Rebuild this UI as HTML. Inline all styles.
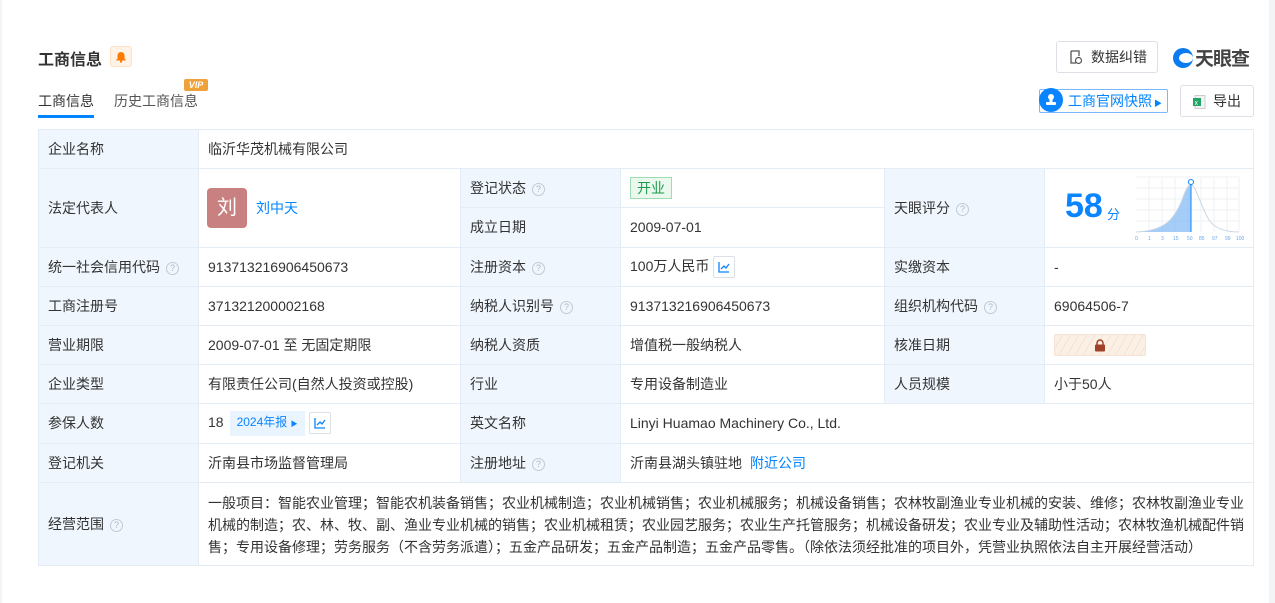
<!DOCTYPE html>
<html><head><meta charset="utf-8"><style>
*{box-sizing:border-box;margin:0;padding:0}
body{width:1275px;height:603px;background:#fff;font-family:"Liberation Sans","Noto Sans CJK SC",sans-serif;font-size:14px;color:#333;position:relative;overflow:hidden}
.edge{position:absolute;top:0;right:0;width:6px;height:603px;background:#f3f4f6}
.ledge{position:absolute;top:0;left:0;width:2px;height:603px;background:#f3f4f6}
.title{position:absolute;left:38px;top:46px;font-size:16px;font-weight:700;color:#333}
.bell{position:absolute;left:110px;top:46px;width:22px;height:21px;background:#fff3e8;border:1px solid #ffe0c2;border-radius:3px}
.tab1{position:absolute;left:38px;top:91px;font-size:14px;color:#333}
.tabline{position:absolute;left:38px;top:115px;width:56px;height:3px;background:#0084ff}
.tab2{position:absolute;left:114px;top:91px;color:#555}
.vip{position:absolute;left:184px;top:79px;width:24px;height:12px;background:#f0a23a;color:#fff;font-size:9px;font-weight:bold;font-style:italic;text-align:center;line-height:12px;border-radius:2px}
.btn{position:absolute;border:1px solid #dcdfe6;border-radius:3px;background:#fff;color:#333;font-size:14px}
table{position:absolute;left:38px;top:129px;border-collapse:collapse;table-layout:fixed}
td{border:1px solid #e4ecf5;height:39.2px;padding:0 9px;vertical-align:middle;font-size:14px;color:#333}
td.h{background:#eff6fd}
.q{display:inline-block;width:13px;height:13px;border:1px solid #c2cad6;border-radius:50%;font-size:9px;color:#b0b8c4;text-align:center;line-height:11px;vertical-align:1px;margin-left:6px}
a{color:#0084ff;text-decoration:none}
.ic{display:inline-block;width:22px;height:22px;border:1px solid #dcdfe6;border-radius:2px;vertical-align:middle;margin-left:4px;position:relative}
</style></head><body>
<div class="ledge"></div><div class="edge"></div>
<div class="title">工商信息</div>
<div class="bell"><svg width="20" height="19" viewBox="0 0 20 19"><path d="M6.5 12.5 V8.5 a3.5 3.5 0 0 1 7 0 V12.5 Z" fill="#ff7a00"/><rect x="5.5" y="12" width="9" height="1.5" fill="#ff7a00"/><circle cx="10" cy="14.5" r="1.2" fill="#ff7a00"/></svg></div>
<div class="tab1">工商信息</div><div class="tabline"></div>
<div class="tab2">历史工商信息</div><div class="vip">VIP</div>
<div class="btn" style="left:1056px;top:41px;width:102px;height:32px;line-height:30px;padding-left:34px">数据纠错
<svg style="position:absolute;left:12px;top:8px" width="14" height="15" viewBox="0 0 14 15"><path d="M2 1h8v5M2 1v12h5" fill="none" stroke="#555" stroke-width="1.3"/><circle cx="9.5" cy="10.5" r="3" fill="none" stroke="#555" stroke-width="1.2"/></svg></div>
<div style="position:absolute;left:1173px;top:44px;font-size:19px;font-weight:bold;color:#444;letter-spacing:-1px"><span style="display:inline-block;width:20px;height:20px;border-radius:50%;background:#0a7cf0;vertical-align:-3px;margin-right:2px;position:relative"><span style="position:absolute;left:6px;top:5px;width:14px;height:10px;border-radius:50%;background:#fff"></span></span>天眼查</div>
<div style="position:absolute;left:1039px;top:89px;width:129px;height:24px;border:1px solid #79b8ff;border-radius:2px;color:#0084ff;font-size:14px;line-height:22px;padding-left:28px">工商官网快照<span style="font-size:8px;margin-left:2px">▶</span></div>
<div style="position:absolute;left:1039px;top:88px;width:24px;height:24px;border-radius:50%;background:#0a84ff"><svg width="24" height="24" viewBox="0 0 24 24"><circle cx="12" cy="9" r="3" fill="#fff"/><rect x="10.5" y="11" width="3" height="3" fill="#fff"/><rect x="7" y="14" width="10" height="3" rx="1" fill="#fff"/></svg></div>
<div class="btn" style="left:1180px;top:85px;width:74px;height:32px;line-height:30px;padding-left:32px">导出
<svg style="position:absolute;left:12px;top:9px" width="13" height="14" viewBox="0 0 13 14"><rect x="2" y="0.5" width="10" height="13" fill="#f4f4f4" stroke="#ccc"/><rect x="0" y="3" width="8" height="8" fill="#21a366"/><text x="1.5" y="10" font-size="7" fill="#fff" font-family="Liberation Sans">x</text></svg></div>
<table>
<colgroup><col style="width:160px"><col style="width:262px"><col style="width:160px"><col style="width:264px"><col style="width:160px"><col style="width:209px"></colgroup>
<tr><td class="h">企业名称</td><td colspan="5">临沂华茂机械有限公司</td></tr>
<tr><td class="h" rowspan="2">法定代表人</td><td rowspan="2" style="padding-left:8px"><span style="display:inline-block;width:40px;height:40px;background:#c98080;border-radius:4px;color:#fff;font-size:20px;text-align:center;line-height:40px;vertical-align:middle">刘</span><a style="margin-left:9px;vertical-align:middle">刘中天</a></td><td class="h">登记状态<span class="q">?</span></td><td><span style="display:inline-block;background:#eaf8ee;border:1px solid #9fdcb0;color:#1d9d4a;padding:0 6px;line-height:20px;font-size:14px">开业</span></td><td class="h" rowspan="2">天眼评分<span class="q">?</span></td><td rowspan="2" style="position:relative;padding:0">
<span style="position:absolute;left:20px;top:18px;font-size:34px;font-weight:bold;color:#0a84ff">58</span><span style="position:absolute;left:62px;top:35px;font-size:13px;color:#0a84ff">分</span>
<svg style="position:absolute;left:89px;top:6px" width="110" height="66" viewBox="0 0 110 66"><g stroke="#eef0f3" stroke-width="1"><path d="M2 2H105M2 13H105M2 24H105M2 35H105M2 46H105M15 2V57M28 2V57M41 2V57M54 2V57M67 2V57M80 2V57M93 2V57M105 2V57"/></g><path d="M2 57 C30 56 40 45 48 25 C52 14 54 10 57 10 L57 57Z" fill="#7fb8f5" opacity=".7"/><path d="M2 57 C30 56 40 45 48 25 C52 14 54 10 57 10 C62 10 66 30 75 45 C82 55 95 57 105 57" fill="none" stroke="#c9d6e6"/><path d="M57 8V57" stroke="#0a84ff"/><circle cx="57" cy="7" r="2.5" fill="#fff" stroke="#0a84ff"/><text y="65" font-size="5" fill="#6aa7e8" font-family="Liberation Sans"><tspan x="1">0</tspan><tspan x="14">1</tspan><tspan x="27">3</tspan><tspan x="39">15</tspan><tspan x="53">50</tspan><tspan x="65">85</tspan><tspan x="78">97</tspan><tspan x="91">99</tspan><tspan x="102">100</tspan></text></svg></td></tr>
<tr><td class="h">成立日期</td><td>2009-07-01</td></tr>
<tr><td class="h">统一社会信用代码<span class="q">?</span></td><td>913713216906450673</td><td class="h">注册资本<span class="q">?</span></td><td>100万人民币<span class="ic"><svg width="20" height="20" viewBox="0 0 20 20"><path d="M5 5V15H15M7 12L10 9L12 11L15 7" fill="none" stroke="#0a84ff" stroke-width="1.3"/></svg></span></td><td class="h">实缴资本</td><td>-</td></tr>
<tr><td class="h">工商注册号</td><td>371321200002168</td><td class="h">纳税人识别号<span class="q">?</span></td><td>913713216906450673</td><td class="h">组织机构代码<span class="q">?</span></td><td>69064506-7</td></tr>
<tr><td class="h">营业期限</td><td>2009-07-01 至 无固定期限</td><td class="h">纳税人资质</td><td>增值税一般纳税人</td><td class="h">核准日期</td><td><span style="display:inline-block;width:92px;height:22px;background:repeating-linear-gradient(120deg,#fbf0e6 0 6px,#f5e2d2 6px 7px);border:1px solid #f5e2d2;border-radius:2px;position:relative;vertical-align:middle"><svg style="position:absolute;left:39px;top:4px" width="12" height="13" viewBox="0 0 12 13"><path d="M3 6V4a3 3 0 0 1 6 0v2" fill="none" stroke="#a0422a" stroke-width="1.5"/><rect x="1" y="5.5" width="10" height="7" rx="1" fill="#a0422a"/></svg></span></td></tr>
<tr><td class="h">企业类型</td><td>有限责任公司(自然人投资或控股)</td><td class="h">行业</td><td>专用设备制造业</td><td class="h">人员规模</td><td>小于50人</td></tr>
<tr><td class="h">参保人数</td><td>18<span style="display:inline-block;background:#eaf4ff;color:#0a84ff;font-size:12px;padding:0 7px;line-height:22px;margin-left:6px;vertical-align:middle">2024年报 <span style="font-size:7px">▶</span></span><span class="ic"><svg width="20" height="20" viewBox="0 0 20 20"><path d="M5 5V15H15M7 12L10 9L12 11L15 7" fill="none" stroke="#0a84ff" stroke-width="1.3"/></svg></span></td><td class="h">英文名称</td><td colspan="3">Linyi Huamao Machinery Co., Ltd.</td></tr>
<tr><td class="h">登记机关</td><td>沂南县市场监督管理局</td><td class="h">注册地址<span class="q">?</span></td><td colspan="3">沂南县湖头镇驻地<a style="margin-left:8px">附近公司</a></td></tr>
<tr><td class="h" style="height:83px">经营范围<span class="q">?</span></td><td colspan="5" style="line-height:22px;padding-top:2px">一般项目：智能农业管理；智能农机装备销售；农业机械制造；农业机械销售；农业机械服务；机械设备销售；农林牧副渔业专业机械的安装、维修；农林牧副渔业专业机械的制造；农、林、牧、副、渔业专业机械的销售；农业机械租赁；农业园艺服务；农业生产托管服务；机械设备研发；农业专业及辅助性活动；农林牧渔机械配件销售；专用设备修理；劳务服务（不含劳务派遣）；五金产品研发；五金产品制造；五金产品零售。（除依法须经批准的项目外，凭营业执照依法自主开展经营活动）</td></tr>
</table>
</body></html>
